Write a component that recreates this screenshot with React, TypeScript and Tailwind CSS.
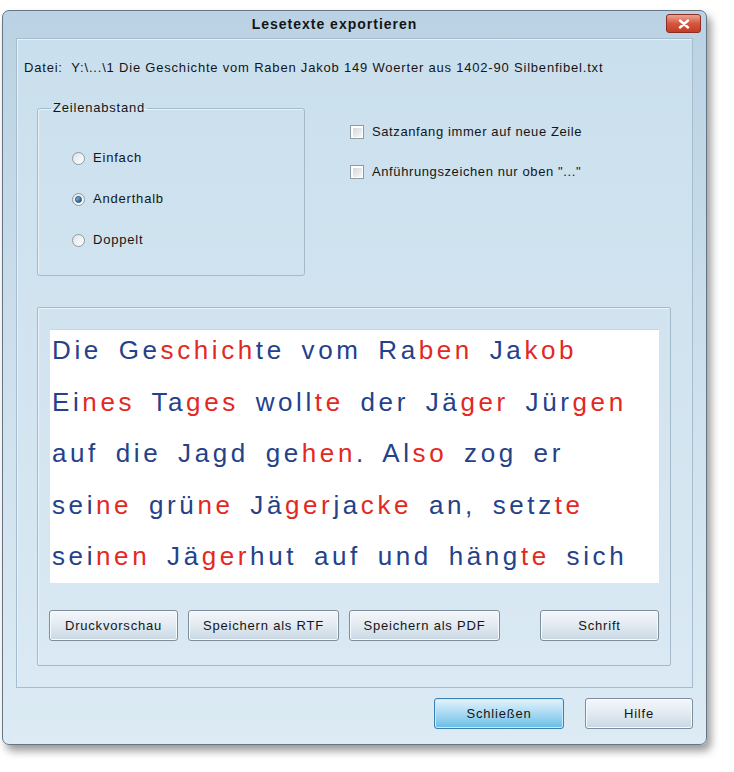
import React from "react";

const lines = [
  "Die Ge[schich]te vom Ra[ben] Ja[kob]",
  "Ei[nes] Ta[ges] woll[te] der Jä[ger] Jür[gen]",
  "auf die Jagd ge[hen]. Al[so] zog er",
  "sei[ne] grü[ne] Jä[ger]ja[cke] an, setz[te]",
  "sei[nen] Jä[ger]hut auf und häng[te] sich",
];

// "[...]" marks the red syllable
function Line({ text }: { text: string }) {
  const parts = text.split(/(\[[^\]]+\])/).filter(Boolean);
  return (
    <div className="leading-[36px] whitespace-pre">
      {parts.map((p, i) =>
        p.startsWith("[") ? (
          <span key={i} className="text-[#e3291f]">
            {p.slice(1, -1)}
          </span>
        ) : (
          <span key={i}>{p}</span>
        )
      )}
    </div>
  );
}

function Radio({ label, checked }: { label: string; checked?: boolean }) {
  return (
    <div className="flex items-center h-[16px]">
      <div className="w-[13px] h-[13px] rounded-full border border-[#8f9aa3] bg-gradient-to-br from-[#dfe3e6] to-[#ffffff] flex items-center justify-center">
        {checked && (
          <div className="w-[7px] h-[7px] rounded-full bg-gradient-to-br from-[#8fc4ee] to-[#174f8c] border border-[#1c4a78]" />
        )}
      </div>
      <span className="ml-[8px]">{label}</span>
    </div>
  );
}

function Check({ label }: { label: string }) {
  return (
    <div className="flex items-center h-[16px]">
      <div className="w-[14px] h-[14px] border border-[#8f9aa3] bg-white flex items-center justify-center">
        <div className="w-[9px] h-[9px] bg-gradient-to-br from-[#d3d8dc] to-[#f7f8f9]" />
      </div>
      <span className="ml-[8px] tracking-[0.6px]">{label}</span>
    </div>
  );
}

function Btn({
  label,
  w,
  primary,
}: {
  label: string;
  w: string;
  primary?: boolean;
}) {
  return (
    <button
      className={
        w +
        " h-[31px] rounded-[3px] border flex items-center justify-center " +
        (primary
          ? "border-[#3c7fb1] bg-gradient-to-b from-[#e3f4fc] via-[#a9d9f2] to-[#66bde6] shadow-[inset_0_0_0_1px_#c8ecfb]"
          : "border-[#7c8d9c] bg-gradient-to-b from-[#f4f7fa] via-[#e2eaf1] to-[#c9d7e3] shadow-[inset_0_0_0_1px_#f8fbfd]")
      }
    >
      {label}
    </button>
  );
}

export default function App() {
  return (
    <div className="w-[734px] h-[772px] bg-white pt-[10px] pl-[2px] font-['Liberation_Sans',Arial,sans-serif] text-[13px] tracking-[0.8px] text-[#151515]">
      <div className="relative w-[705px] h-[735px] rounded-[7px] border border-[#667584] bg-gradient-to-b from-[#bad2e3] via-[#cde0ed] to-[#dcebf4] shadow-[4px_6px_9px_rgba(0,0,0,0.4)] flex flex-col">
        {/* title bar */}
        <div className="h-[27px] flex items-center justify-center">
          <span className="font-bold text-[14px] tracking-[1px] ml-[-40px]">
            Lesetexte exportieren
          </span>
          <div className="absolute right-[5px] top-[3px] w-[35px] h-[19px] rounded-[3px] border border-[#8a2d22] bg-gradient-to-b from-[#eba393] via-[#d6563f] to-[#c43c26] flex items-center justify-center">
            <svg width="12" height="10" viewBox="0 0 12 10">
              <path
                d="M2 1.5 L10 8.5 M10 1.5 L2 8.5"
                stroke="#fff"
                strokeWidth="2.4"
                strokeLinecap="round"
              />
            </svg>
          </div>
        </div>

        {/* main panel */}
        <div className="mx-[13px] h-[650px] border border-[#a6bdcf] shadow-[inset_1px_1px_0_#e6f0f7] bg-gradient-to-b from-[#cadfed] to-[#dae9f3] flex flex-col">
          <div className="mt-[21px] ml-[7px] leading-[16px]">
            Datei:&nbsp; Y:\...\1 Die Geschichte vom Raben Jakob 149 Woerter aus 1402-90 Silbenfibel.txt
          </div>

          <div className="flex mt-[23px]">
            <fieldset className="ml-[20px] w-[268px] h-[177px] border border-[#a4bacb] rounded-[3px] shadow-[inset_1px_1px_0_#eaf3f9]">
              <legend className="ml-[13px] px-[2px] leading-[18px]">
                Zeilenabstand
              </legend>
              <div className="flex flex-col gap-[25px] pl-[34px] pt-[33px]">
                <Radio label="Einfach" />
                <Radio label="Anderthalb" checked />
                <Radio label="Doppelt" />
              </div>
            </fieldset>
            <div className="ml-[45px] pt-[25px] flex flex-col gap-[24px]">
              <Check label="Satzanfang immer auf neue Zeile" />
              <Check label={"Anführungszeichen nur oben \"...\""} />
            </div>
          </div>

          <div className="mt-[31px] ml-[20px] mr-[21px] h-[359px] border border-[#a4bacb] rounded-[2px] shadow-[inset_1px_1px_0_#eaf3f9] px-[11px] pt-[21px] flex flex-col">
            <div className="ml-[1px] h-[254px] bg-white border-t border-[#c9d6e0] pl-[2px] pt-[2px] flex flex-col gap-[15.5px] text-[26px] tracking-[3.6px] [word-spacing:6px] text-[#24428a]">
              {lines.map((l, i) => (
                <Line key={i} text={l} />
              ))}
            </div>
            <div className="flex mt-[27px]">
              <Btn label="Druckvorschau" w="w-[129px]" />
              <div className="w-[10px]" />
              <Btn label="Speichern als RTF" w="w-[151px]" />
              <div className="w-[10px]" />
              <Btn label="Speichern als PDF" w="w-[151px]" />
              <div className="flex-1" />
              <Btn label="Schrift" w="w-[119px]" />
            </div>
          </div>
        </div>

        {/* bottom buttons */}
        <div className="flex justify-end gap-[21px] mt-[10px] mr-[13px]">
          <Btn label="Schließen" w="w-[130px]" primary />
          <Btn label="Hilfe" w="w-[108px]" />
        </div>
      </div>
    </div>
  );
}
